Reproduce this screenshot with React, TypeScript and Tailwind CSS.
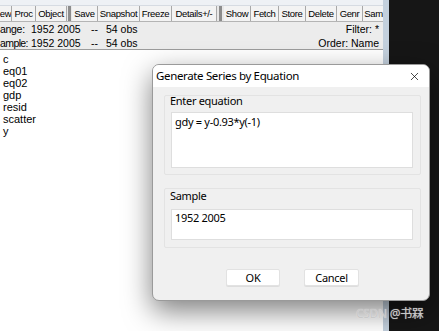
import { X } from 'lucide-react';

const tools: { label: string; w: number; sep?: boolean }[] = [
  { label: 'ew', w: 12 },
  { label: 'Proc', w: 24 },
  { label: 'Object', w: 31 },
  { label: '', w: 5, sep: true },
  { label: 'Save', w: 26 },
  { label: 'Snapshot', w: 42 },
  { label: 'Freeze', w: 32 },
  { label: 'Details+/-', w: 45 },
  { label: '', w: 7, sep: true },
  { label: 'Show', w: 27 },
  { label: 'Fetch', w: 28 },
  { label: 'Store', w: 27 },
  { label: 'Delete', w: 31 },
  { label: 'Genr', w: 26 },
  { label: 'Sam', w: 22 },
];

const series = ['c', 'eq01', 'eq02', 'gdp', 'resid', 'scatter', 'y'];

function Workfile() {
  return (
    <div className="w-[383px] h-full flex flex-col bg-white font-['Liberation_Sans',Arial,sans-serif] text-black">
      {/* title bar remnant */}
      <div className="h-[6px] bg-[#eef1f5] border-b border-[#d6dbe2]" />

      {/* toolbar */}
      <div className="h-[16px] flex bg-[#e8e8e8] border-b border-[#b4b4b4] overflow-hidden">
        {tools.map((t, i) =>
          t.sep ? (
            <div key={i} style={{ width: t.w }} className="h-full shrink-0 flex justify-center bg-[#e8e8e8]">
              <div className="w-[3px] h-full bg-[#8c8c8c]" />
            </div>
          ) : (
            <div
              key={i}
              style={{ width: t.w }}
              className="h-full shrink-0 flex items-center justify-center bg-[#f3f3f3] border-r border-[#a8a8a8] text-[9.5px] leading-none tracking-[-0.35px] whitespace-nowrap overflow-hidden"
            >
              {t.label}
            </div>
          ),
        )}
      </div>

      {/* range / sample */}
      <div className="h-[28px] bg-[#ececec] border-b border-[#9c9c9c] text-[10.5px] leading-[14px] flex flex-col">
        <div className="flex items-center">
          <span className="w-[31px] tracking-[-0.3px]">ange:</span>
          <span className="w-[60px]">1952 2005</span>
          <span className="w-[15px]">--</span>
          <span>54 obs</span>
          <span className="ml-auto pr-[4px]">Filter: *</span>
        </div>
        <div className="flex items-center">
          <span className="w-[31px] tracking-[-0.6px] whitespace-nowrap overflow-hidden">ample:</span>
          <span className="w-[60px]">1952 2005</span>
          <span className="w-[15px]">--</span>
          <span>54 obs</span>
          <span className="ml-auto pr-[4px]">Order: Name</span>
        </div>
      </div>

      {/* series list */}
      <div className="flex-1 pt-[3px] pl-[3px] text-[11px] leading-[12px] bg-white">
        {series.map(s => (
          <div key={s}>{s}</div>
        ))}
      </div>
    </div>
  );
}

function GenrDialog() {
  return (
    <div className="absolute left-[152px] top-[64px] w-[278px] h-[237px] rounded-[7px] border border-[#9a9a9a] bg-[#f0f0f0] shadow-[0_10px_28px_rgba(0,0,0,0.5)] overflow-hidden font-['Noto_Sans','Open_Sans',sans-serif] text-black flex flex-col">
      <div className="h-[22px] bg-white flex items-center pl-[3px] pr-[8px] shrink-0">
        <span className="text-[11.5px] leading-none tracking-[-0.35px]">Generate Series by Equation</span>
        <X className="ml-auto w-[13px] h-[13px]" strokeWidth={1.3} />
      </div>

      <div className="flex-1 pl-[11px] pr-[8px] pt-[8px] text-[11px] tracking-[-0.3px]">
        <div className="h-[80px] border border-[#e3e3e3] rounded-[2px] pl-[5px] pr-[7px] flex flex-col">
          <div className="h-[14px] leading-[12px] mt-[-1px]">Enter equation</div>
          <div className="mt-[3px] ml-[1px] h-[56px] bg-white border border-[#dedede] px-[3px] pt-[2px] leading-[14px]">
            gdy = y-0.93*y(-1)
          </div>
        </div>

        <div className="mt-[13px] h-[60px] border border-[#e3e3e3] rounded-[2px] pl-[5px] pr-[7px] flex flex-col">
          <div className="h-[14px] leading-[12px] mt-[1px]">Sample</div>
          <div className="mt-[5px] ml-[1px] h-[31px] bg-white border border-[#dedede] px-[3px] pt-[1px] leading-[14px]">
            1952 2005
          </div>
        </div>

        <div className="mt-[21px] flex gap-[24px] pl-[62px]">
          <button className="w-[54px] h-[17px] bg-white border border-[#e2e2e2] rounded-[2px] shadow-[0_1px_0_rgba(0,0,0,0.08)] text-[11px] leading-none">
            OK
          </button>
          <button className="w-[55px] h-[17px] bg-white border border-[#e2e2e2] rounded-[2px] shadow-[0_1px_0_rgba(0,0,0,0.08)] text-[11px] leading-none">
            Cancel
          </button>
        </div>
      </div>
    </div>
  );
}

export default function App() {
  return (
    <div className="relative w-[439px] h-[331px] overflow-hidden flex bg-[#161616]">
      <Workfile />
      <div className="w-[6px] h-full bg-[#c3d0dd]" />
      <div className="flex-1 h-full bg-[#161616]" />

      <GenrDialog />

      <div className="absolute left-[356px] top-[308px] text-[12px] leading-none text-[#c8c8c8] font-['Noto_Sans','Noto_Sans_CJK_SC',sans-serif] tracking-[-0.3px] [text-shadow:0_0_1px_rgba(255,255,255,0.6)]">
        CSDN @书槑
      </div>
    </div>
  );
}
